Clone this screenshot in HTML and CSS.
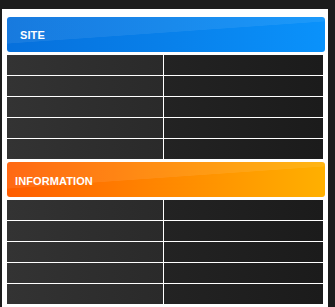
FILE: index.html
```html
<!DOCTYPE html>
<html>
<head>
<meta charset="utf-8">
<link rel="stylesheet" href="styles.css">
</head>
<body>
<div class="panel">
  <section class="block">
    <h2 class="head head-blue">SITE</h2>
    <div class="rows">
      <div class="row"><div class="cell cell-l"></div><div class="cell cell-r"></div></div>
      <div class="row"><div class="cell cell-l"></div><div class="cell cell-r"></div></div>
      <div class="row"><div class="cell cell-l"></div><div class="cell cell-r"></div></div>
      <div class="row"><div class="cell cell-l"></div><div class="cell cell-r"></div></div>
      <div class="row"><div class="cell cell-l"></div><div class="cell cell-r"></div></div>
    </div>
  </section>
  <section class="block">
    <h2 class="head head-orange">INFORMATION</h2>
    <div class="rows">
      <div class="row"><div class="cell cell-l"></div><div class="cell cell-r"></div></div>
      <div class="row"><div class="cell cell-l"></div><div class="cell cell-r"></div></div>
      <div class="row"><div class="cell cell-l"></div><div class="cell cell-r"></div></div>
      <div class="row"><div class="cell cell-l"></div><div class="cell cell-r"></div></div>
      <div class="row"><div class="cell cell-l"></div><div class="cell cell-r"></div></div>
    </div>
  </section>
</div>
</body>
</html>
```

FILE: styles.css
```css
html, body {
  margin: 0;
  padding: 0;
  background: #1c1c1c;
  height: 307px;
  overflow: hidden;
}

.panel {
  margin: 9px 0 0 2px;
  width: 320px;
  height: 298px;
  background: #ffffff;
  padding: 8px 1px 0 5px;
  display: flex;
  flex-direction: column;
  gap: 3px;
}

.block {
  display: flex;
  flex-direction: column;
  gap: 2px;
}

.head {
  margin: 0 0 1px 0;
  height: 35px;
  width: 318px;
  box-sizing: border-box;
  border-radius: 3px;
  display: flex;
  align-items: center;
  font-family: "Liberation Sans", Arial, sans-serif;
  font-weight: bold;
  font-size: 11px;
  color: #ffffff;
  letter-spacing: 0.1px;
}

.head-blue {
  padding: 1px 0 0 13px;
  background:
    linear-gradient(176deg, rgba(255,255,255,0.07) 0%, rgba(255,255,255,0.07) 46%, rgba(0,0,0,0) 47%),
    linear-gradient(90deg, #0670dc 0%, #0880ea 50%, #0a92fb 100%);
}

.head-orange {
  padding: 3px 0 0 8px;
  background:
    linear-gradient(176deg, rgba(255,255,255,0.08) 0%, rgba(255,255,255,0.08) 46%, rgba(255,255,255,0) 47%),
    linear-gradient(90deg, #ff5c00 0%, #ff8400 45%, #ffb000 100%);
}

.rows {
  display: flex;
  flex-direction: column;
  gap: 1px;
  width: 316px;
}

.row {
  display: flex;
  gap: 1px;
  height: 20px;
}

.cell-l {
  width: 156px;
  background: linear-gradient(90deg, #333333 0%, #2a2a2a 100%);
}

.cell-r {
  width: 159px;
  background: linear-gradient(90deg, #232323 0%, #1b1b1b 100%);
}
```
